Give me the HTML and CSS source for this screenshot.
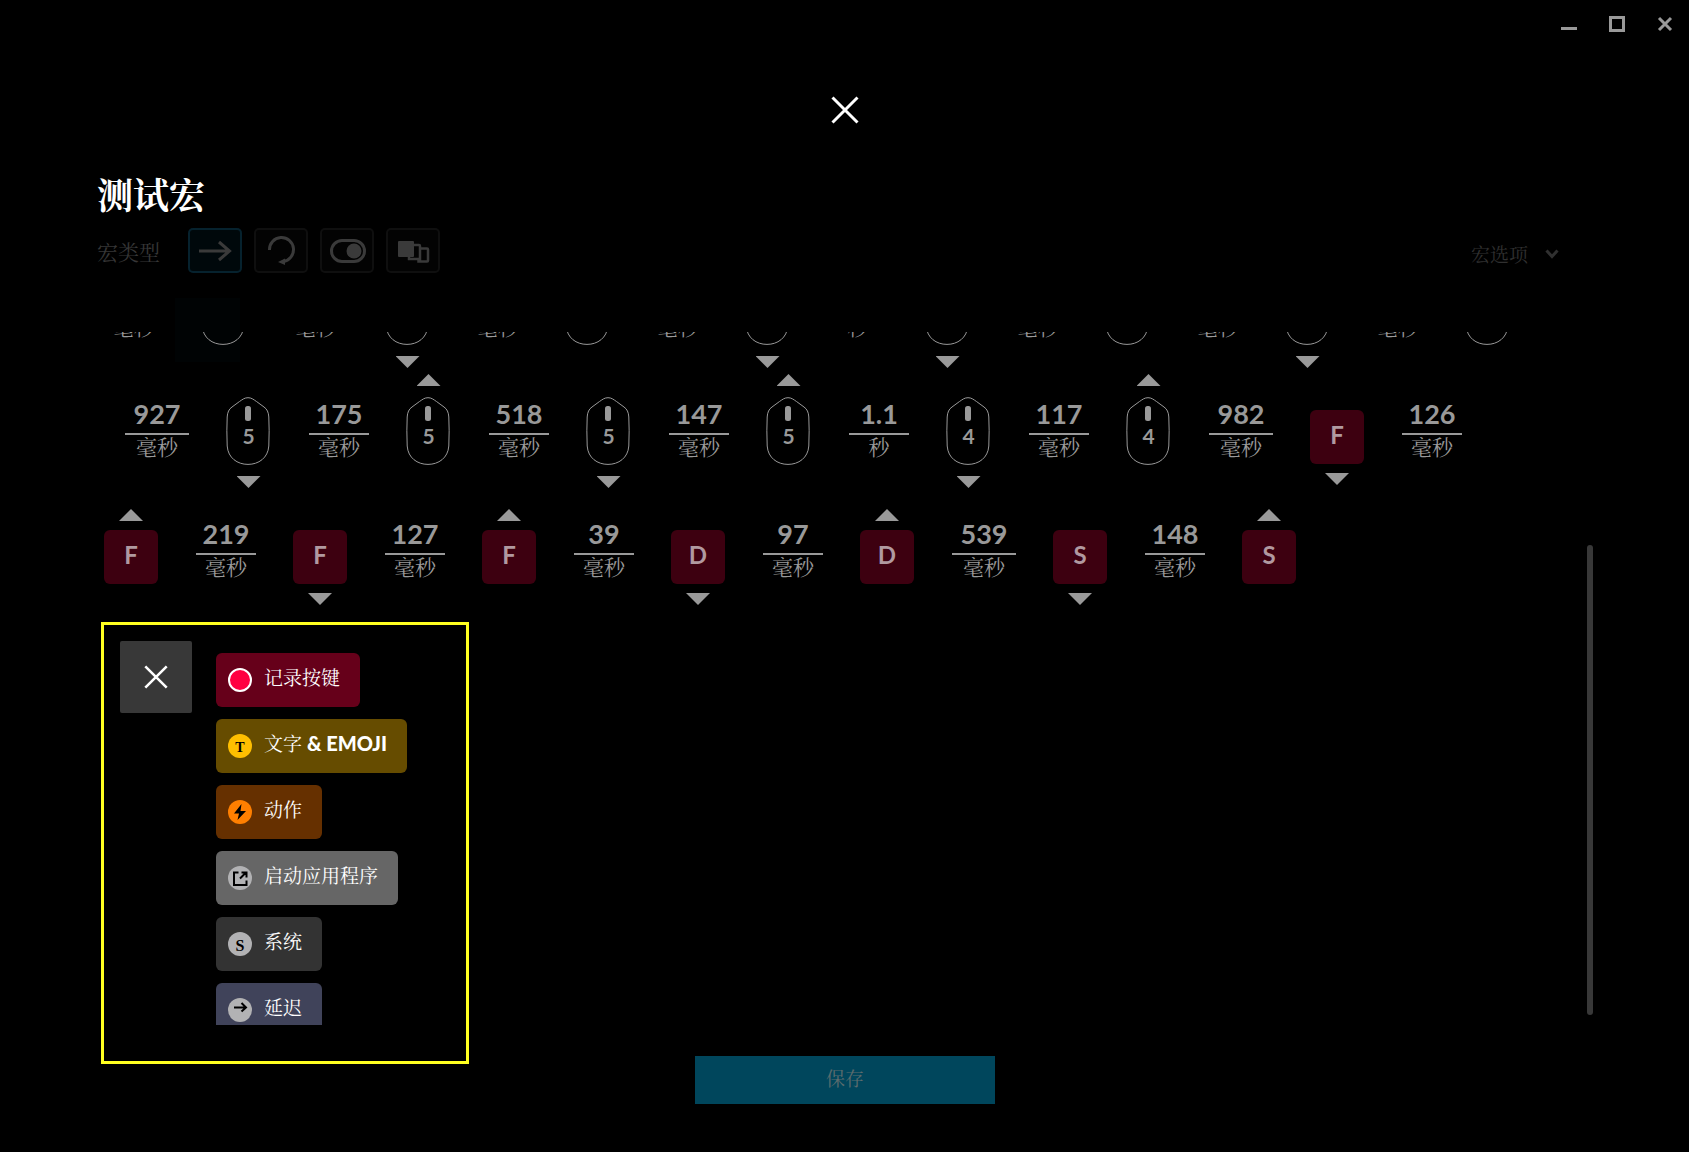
FILE: index.html
```
<!DOCTYPE html>
<html lang="zh-CN">
<head>
    <meta charset="UTF-8">
    <meta name="viewport" content="width=device-width, initial-scale=1.0">
    <title>测试宏</title>
    <link rel="stylesheet" href="styles.css">
</head>
<body>
    <!-- shared shapes -->
    <svg class="symbols" aria-hidden="true">
        <symbol id="mouse" viewBox="0 0 45 68">
            <path d="M22 .7C25.500 .7 27.500 2.500 30.500 4.500L38 10Q42.500 13 42.800 20Q43.500 33 42.800 49C42 61 32.500 67.400 22 67.400S2 61 1.200 49Q.5 33 1.200 20Q1.500 13 6 10L13.500 4.500C16.500 2.500 18.500 .7 22 .7Z" fill="none" stroke="#999"/>
            <rect x="19" y="9" width="6" height="15" rx="2.500" fill="#999"/>
        </symbol>
        <symbol id="cross" viewBox="0 0 28 28">
            <path d="M1.500 1.500L26.500 26.500M26.500 1.500L1.500 26.500" fill="none" stroke="currentColor" stroke-width="3"/>
        </symbol>
    </svg>

    <div class="ghost"></div>

    <div class="app">
        <div class="titlebar">
            <button aria-label="最小化">
                <svg width="16" height="16"><path d="M0 12.500H16" stroke="currentColor" stroke-width="3"/></svg>
            </button>
            <button aria-label="最大化">
                <svg width="16" height="16"><rect x="1.500" y="1.500" width="13" height="13" fill="none" stroke="currentColor" stroke-width="3"/></svg>
            </button>
            <button aria-label="关闭">
                <svg width="16" height="16"><path d="M2 2L14 14M14 2L2 14" stroke="currentColor" stroke-width="3"/></svg>
            </button>
        </div>

        <button class="close-editor" aria-label="关闭编辑器"><svg width="28" height="28"><use href="#cross"/></svg></button>

        <header class="header">
            <h1>测试宏</h1>
            <div class="toolbar">
                <span class="toolbar-label">宏类型</span>
                <div class="macro-types">
                    <button class="type active" aria-label="无重复">
                        <svg width="54" height="45"><path d="M11 23H41M31 14L41.500 23L31 32" fill="none" stroke="currentColor" stroke-width="3"/></svg>
                    </button>
                    <button class="type" aria-label="按住时重复">
                        <svg width="54" height="45"><path d="M15.500 22A12 12 0 1 1 29 33.500" fill="none" stroke="currentColor" stroke-width="3"/><path d="M24 34L31 30.500V37Z" fill="currentColor"/></svg>
                    </button>
                    <button class="type" aria-label="切换">
                        <svg width="54" height="45"><rect x="11.500" y="12.500" width="33" height="21" rx="10.500" fill="none" stroke="currentColor" stroke-width="3"/><circle cx="34" cy="23" r="7.500" fill="currentColor"/></svg>
                    </button>
                    <button class="type" aria-label="序列">
                        <svg width="54" height="45"><rect x="12" y="13" width="16" height="16" rx="1" fill="currentColor"/><path d="M27 17H33Q34 17 34 18V31H23V28M34 20.500H41Q42 20.500 42 21.500V32.500Q42 33.500 41 33.500H32.500V31" fill="none" stroke="currentColor" stroke-width="2.500"/></svg>
                    </button>
                </div>
                <button class="options">宏选项
                    <svg width="14" height="10"><path d="M1.500 1.500L7 7.500L12.500 1.500" fill="none" stroke="currentColor" stroke-width="3"/></svg>
                </button>
            </div>
        </header>

        <main class="editor">
            <div class="scroll-area">
                <!-- scrolled almost out of view -->
                <div class="row">
                    <div class="delay"><span class="value"></span><span class="unit">毫秒</span></div>
                    <div class="mouse"><svg><use href="#mouse"/></svg></div>
                    <div class="delay wide"><span class="value"></span><span class="unit">毫秒</span></div>
                    <div class="mouse down"><svg><use href="#mouse"/></svg></div>
                    <div class="delay"><span class="value"></span><span class="unit">毫秒</span></div>
                    <div class="mouse"><svg><use href="#mouse"/></svg></div>
                    <div class="delay"><span class="value"></span><span class="unit">毫秒</span></div>
                    <div class="mouse down"><svg><use href="#mouse"/></svg></div>
                    <div class="delay"><span class="value"></span><span class="unit">秒</span></div>
                    <div class="mouse down"><svg><use href="#mouse"/></svg></div>
                    <div class="delay"><span class="value"></span><span class="unit">毫秒</span></div>
                    <div class="mouse"><svg><use href="#mouse"/></svg></div>
                    <div class="delay"><span class="value"></span><span class="unit">毫秒</span></div>
                    <div class="mouse down"><svg><use href="#mouse"/></svg></div>
                    <div class="delay"><span class="value"></span><span class="unit">毫秒</span></div>
                    <div class="mouse"><svg><use href="#mouse"/></svg></div>
                </div>
                <div class="row indent">
                    <div class="delay wide"><span class="value">927</span><span class="unit">毫秒</span></div>
                    <div class="mouse down"><svg><use href="#mouse"/></svg><span>5</span></div>
                    <div class="delay"><span class="value">175</span><span class="unit">毫秒</span></div>
                    <div class="mouse up"><svg><use href="#mouse"/></svg><span>5</span></div>
                    <div class="delay"><span class="value">518</span><span class="unit">毫秒</span></div>
                    <div class="mouse down"><svg><use href="#mouse"/></svg><span>5</span></div>
                    <div class="delay"><span class="value">147</span><span class="unit">毫秒</span></div>
                    <div class="mouse up"><svg><use href="#mouse"/></svg><span>5</span></div>
                    <div class="delay"><span class="value">1.1</span><span class="unit">秒</span></div>
                    <div class="mouse down"><svg><use href="#mouse"/></svg><span>4</span></div>
                    <div class="delay"><span class="value">117</span><span class="unit">毫秒</span></div>
                    <div class="mouse up"><svg><use href="#mouse"/></svg><span>4</span></div>
                    <div class="delay wide"><span class="value">982</span><span class="unit">毫秒</span></div>
                    <div class="key down"><kbd>F</kbd></div>
                    <div class="delay"><span class="value">126</span><span class="unit">毫秒</span></div>
                </div>
                <div class="row">
                    <div class="key up"><kbd>F</kbd></div>
                    <div class="delay"><span class="value">219</span><span class="unit">毫秒</span></div>
                    <div class="key down"><kbd>F</kbd></div>
                    <div class="delay"><span class="value">127</span><span class="unit">毫秒</span></div>
                    <div class="key up"><kbd>F</kbd></div>
                    <div class="delay"><span class="value">39</span><span class="unit">毫秒</span></div>
                    <div class="key down"><kbd>D</kbd></div>
                    <div class="delay"><span class="value">97</span><span class="unit">毫秒</span></div>
                    <div class="key up"><kbd>D</kbd></div>
                    <div class="delay wide"><span class="value">539</span><span class="unit">毫秒</span></div>
                    <div class="key down"><kbd>S</kbd></div>
                    <div class="delay"><span class="value">148</span><span class="unit">毫秒</span></div>
                    <div class="key up"><kbd>S</kbd></div>
                </div>

                <div class="add-panel">
                    <button class="add-close" aria-label="关闭菜单"><svg width="24" height="24"><use href="#cross"/></svg></button>
                    <div class="actions">
                        <button class="action record">
                            <svg width="24" height="24"><circle cx="12" cy="12" r="11" fill="#ff0040" stroke="#fff" stroke-width="2"/></svg>
                            <span>记录按键</span>
                        </button>
                        <button class="action text">
                            <i class="badge">T</i>
                            <span>文字 <b>&amp; EMOJI</b></span>
                        </button>
                        <button class="action act">
                            <svg width="24" height="24"><circle cx="12" cy="12" r="12" fill="#ff7f00"/><path d="M13.500 4L6 13.500H11L9.500 20L18 11H12.500Z" fill="#000"/></svg>
                            <span>动作</span>
                        </button>
                        <button class="action launch">
                            <svg width="24" height="24"><circle cx="12" cy="12" r="12" fill="#b2b2b4"/><path d="M10.500 6.500H6V19H18.500V14.500M12 12.500L17.500 7M13.500 6.500H18.500V11.500" fill="none" stroke="#000" stroke-width="2"/></svg>
                            <span>启动应用程序</span>
                        </button>
                        <button class="action system">
                            <i class="badge">S</i>
                            <span>系统</span>
                        </button>
                        <button class="action wait">
                            <svg width="24" height="24"><circle cx="12" cy="12" r="12" fill="#b2b2b4"/><path d="M6 9.500H18M13.500 5L18 9.500L13.500 13.500" fill="none" stroke="#000" stroke-width="2"/></svg>
                            <span>延迟</span>
                        </button>
                    </div>
                </div>
            </div>
            <div class="scrollbar"><div class="thumb"></div></div>
            <div class="highlight"></div>
        </main>

        <button class="save">保存</button>
    </div>
</body>
</html>
```
FILE: styles.css
```
:root {
    --line: #999;
    --dim: #363636;
    --key: #3d0010;
    --latin: Lato, "Noto Sans CJK SC", sans-serif;
    --cjk: "Noto Serif CJK SC", "Noto Sans CJK SC", sans-serif;
}

* {
    margin: 0;
    padding: 0;
    box-sizing: border-box;
}

body {
    background: #000;
    color: #fff;
    font-family: var(--cjk);
}

button {
    border: none;
    background: none;
    color: inherit;
    font-family: inherit;
    cursor: pointer;
}

svg {
    display: block;
}

.symbols {
    position: absolute;
    width: 0;
    height: 0;
}

/* page behind the overlay, almost fully dimmed */
.ghost {
    position: absolute;
    left: 175px;
    top: 298px;
    width: 65px;
    height: 64px;
    background: #000304;
}

.app {
    position: relative;
    display: flex;
    flex-direction: column;
    height: 100vh;
    overflow: hidden;
    padding: 0 96px 48px 97px;
}

.titlebar {
    display: flex;
    justify-content: flex-end;
    gap: 32px;
    padding-top: 16px;
    margin-right: -80px;
    color: var(--line);
}

.close-editor {
    align-self: center;
    margin-top: 64px;
}

/* Header */
h1 {
    margin-top: 50px;
    font-size: 36px;
    line-height: 40px;
    font-weight: 700;
}

.toolbar {
    display: flex;
    align-items: center;
    margin-top: 14px;
    margin-right: 34px;
    color: var(--dim);
}

.toolbar-label {
    width: 91px;
    font-size: 21px;
}

.macro-types {
    display: flex;
    gap: 12px;
}

.type {
    width: 54px;
    height: 45px;
    border-radius: 5px;
    background: #030303;
    box-shadow: inset 0 0 0 2px #0f0f0f;
    color: #3a3a3a;
}

.type.active {
    background: #00080b;
    box-shadow: inset 0 0 0 2px #06222e;
}

.options {
    display: flex;
    align-items: center;
    gap: 17px;
    margin-left: auto;
    padding-top: 6px;
    font-size: 19px;
    line-height: 28px;
    color: #303030;
}

/* Macro steps */
.editor {
    position: relative;
    display: flex;
    flex: 1;
    min-height: 0;
    margin: 59px 0 31px;
}

.scroll-area {
    flex: 1;
    overflow: hidden;
}

.row {
    display: flex;
    align-items: flex-start;
    height: 120px;
    padding-left: 7px;
}

.row:first-child {
    margin-top: -78px;
}

.row.indent {
    padding-left: 28px;
}

.delay {
    flex: none;
    width: 60px;
    margin: 24px 37px 0 38px;
    text-align: center;
    color: var(--line);
}

.delay:first-child {
    margin-left: 0;
}

.delay.wide {
    width: 64px;
}

.value {
    display: block;
    height: 37px;
    border-bottom: 2px solid var(--line);
    font: 700 27px/32px var(--latin);
}

.unit {
    display: block;
    font-size: 21px;
    line-height: 22px;
}

.mouse,
.key {
    flex: none;
    display: grid;
    justify-items: center;
}

.mouse {
    gap: 11px;
    grid-template-rows: 12px 68px 12px;
}

.mouse svg,
.mouse span {
    grid-area: 2 / 1;
}

.mouse svg {
    width: 45px;
    height: 68px;
}

.mouse span {
    align-self: start;
    padding-top: 26px;
    font: 700 21px/26px var(--latin);
    color: var(--line);
}

.key {
    gap: 9px;
    grid-template-rows: 12px 54px 12px;
    padding-top: 15px;
}

kbd {
    grid-area: 2 / 1;
    width: 54px;
    height: 54px;
    border-radius: 6px;
    background: var(--key);
    text-align: center;
    font: 700 24px/50px var(--latin);
    color: #b199a0;
}

.up::before,
.down::after {
    content: "";
    width: 24px;
    height: 12px;
    background: var(--line);
}

.up::before {
    grid-area: 1 / 1;
    clip-path: polygon(50% 0, 100% 100%, 0 100%);
}

.down::after {
    grid-area: 3 / 1;
    clip-path: polygon(0 0, 100% 0, 50% 100%);
}

/* Add step menu */
.add-panel {
    display: flex;
    align-items: flex-start;
    gap: 24px;
    padding: 27px 0 0 23px;
}

.add-close {
    display: grid;
    place-items: center;
    width: 72px;
    height: 72px;
    border-radius: 2px;
    background: #383838;
}

.actions {
    display: flex;
    flex-direction: column;
    align-items: flex-start;
    gap: 12px;
    padding-top: 12px;
}

.action {
    display: flex;
    align-items: center;
    gap: 12px;
    height: 54px;
    padding: 0 20px 0 12px;
    border-radius: 6px;
    font-size: 19px;
    line-height: 24px;
}

.action span {
    padding-bottom: 6px;
}

.action b {
    font-family: var(--latin);
    font-weight: 900;
    font-size: 20px;
}

.badge {
    width: 24px;
    height: 24px;
    border-radius: 50%;
    background: #b2b2b4;
    color: #000;
    font: 700 16px/27px "Liberation Serif", serif;
}

.record { background: #66001a; }
.text { background: #664c00; }
.act { background: #663000; }
.launch { background: #666; }
.system { background: #333; }
.wait { background: #40435a; }

.text .badge {
    background: #ffbf00;
    font-size: 14px;
}

.scrollbar {
    width: 6px;
    padding: 213px 0 10px;
}

.thumb {
    height: 100%;
    border-radius: 3px;
    background: #383838;
}

.highlight {
    position: absolute;
    top: 290px;
    left: 4px;
    width: 368px;
    height: 442px;
    border: 3px solid #ffff20;
    pointer-events: none;
}

.save {
    flex: none;
    align-self: center;
    width: 300px;
    height: 48px;
    padding-bottom: 6px;
    background: #00465c;
    color: #5c6c6e;
    font-size: 19px;
}
```
